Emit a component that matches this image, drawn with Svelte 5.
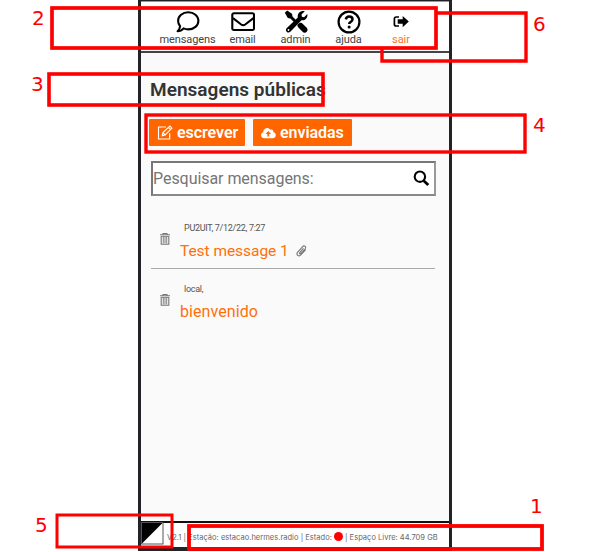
<script>
  const nav = [
    { id: 'chat', label: 'mensagens', ls: -0.1 },
    { id: 'mail', label: 'email', ls: -0.2 },
    { id: 'tools', label: 'admin', ls: -0.1 },
    { id: 'help', label: 'ajuda', ls: -0.1 },
    { id: 'exit', label: 'sair', ls: 0 }
  ];
  const messages = [
    { meta: 'PU2UIT, 7/12/22, 7:27', title: 'Test message 1', attachment: true },
    { meta: 'local,', title: 'bienvenido', attachment: false }
  ];
  const boxes = [
    { x: 52, y: 8, w: 384, h: 40, s: 3.7 },
    { x: 49, y: 74, w: 274, h: 31, s: 3.6 },
    { x: 146, y: 115, w: 379, h: 37, s: 3.4 },
    { x: 57, y: 515, w: 115, h: 32, s: 3 },
    { x: 189, y: 526, w: 353, h: 23, s: 3.8 }
  ];
  const labels = [
    { n: 2, x: 32, y: 25 },
    { n: 3, x: 31, y: 91 },
    { n: 6, x: 533, y: 31 },
    { n: 4, x: 533, y: 132 },
    { n: 5, x: 35, y: 532 },
    { n: 1, x: 530, y: 513 }
  ];
</script>

<div class="page">
  <div class="phone">
    <nav>
      {#each nav as item}
        <div class="item {item.id}">
          <div class="icon">
            {#if item.id === 'chat'}
              <svg width="24" height="24" viewBox="0 0 24 24" fill="none" stroke="#000" stroke-width="2.1" stroke-linejoin="round"><path d="M12.300 2.200c5.700 0 10.100 3.800 10.100 8.600s-4.400 8.600-10.100 8.600c-1.700 0-3.300-.3-4.700-1-1.500 1.700-3.500 2.900-6 2.900 1.500-1.500 2.300-3.200 2.500-5C2.700 14.700 2.100 12.800 2.100 10.800c0-4.800 4.400-8.600 10.200-8.600z" /></svg>
            {:else if item.id === 'mail'}
              <svg width="24" height="24" viewBox="0 0 24 24" fill="none" stroke="#000" stroke-width="2.1" stroke-linejoin="round"><rect x="1.300" y="3.200" width="21.700" height="16.800" rx="1.600" /><path d="M2 8.200l8.200 6.300q2 1.400 4 0L22.500 8.200" /></svg>
            {:else if item.id === 'tools'}
              <svg width="24" height="24" viewBox="0 0 24 24"><path d="M.8 2.800L3.200.4 8 3.800 8.500 6.400 12 10.100 10 12.100 6.300 8.400 3.800 8z" fill="#000" /><path d="M13.300 13l2.100-1.800c1.400-.4 2.600 0 3.500.9l3.800 3.900c1.900 1.900.4 5-2.100 4.900-.8 0-1.500-.4-2-.9l-4-4.100c-.9-.9-1.200-1.700-1.300-2.900z" transform="translate(0 1.800)" fill="#000" /><path d="M20.800 1.300l-3.300 3.300.4 2.200 2.200.4 3.200-3.200c.7 3.500-1.800 6.800-5.800 6.200L6.300 21.800c-2.300 2.300-5.900-1-3.700-3.500L13.800 7.400C13.100 3 17 .1 20.800 1.300z" fill="#000" /><circle cx="4.500" cy="20" r=".9" fill="#fff" /></svg>
            {:else if item.id === 'help'}
              <svg width="24" height="24" viewBox="0 0 24 24" fill="none" stroke="#000"><circle cx="12" cy="12" r="10.400" stroke-width="2.200" /><path d="M8.800 9.300c.5-1.800 1.600-2.700 3.300-2.700 2 0 3.400 1.100 3.400 2.800 0 2.400-3.300 2.400-3.300 4.700" stroke-width="2.500" /><circle cx="12.100" cy="17" r="1.500" fill="#000" stroke="none" /></svg>
            {:else}
              <svg width="16" height="14" viewBox="0 0 16 14"><path d="M6 2H3.200Q1.400 2 1.400 3.800v5.400Q1.400 11 3.200 11H6" fill="none" stroke="#000" stroke-width="1.700" /><path d="M4.700 4.300h5V.9L15.800 6.500 9.700 12.200V8.800h-5z" fill="#000" /></svg>
            {/if}
          </div>
          <span style:letter-spacing="{item.ls}px">{item.label}</span>
        </div>
      {/each}
    </nav>

    <main>
      <h1>Mensagens públicas</h1>
      <div class="actions">
        <button class="write">
          <svg width="16" height="16" viewBox="0 0 16 16" fill="none" stroke="#fff" stroke-width="1.100"><path d="M9 2H1.500v12h11.200V8.300M5.200 10.800l.7-3.200 7-6.600 2 2.200-6.800 6.700zM5.900 7.600l2.200 2.300M11.500 2.400l2 2.200" /></svg>
          <span>escrever</span>
        </button>
        <button class="sent">
          <svg width="15" height="12" viewBox="0 0 15 12"><path d="M3.400 11.300C-.7 11.300-1 6 2.200 5.200 2 1.600 7-.9 9.200 2.700c1.500-.9 3.500.4 3.100 2.200 3.600.8 3.200 6.400-.7 6.400z" fill="#fff" /><path d="M7.300 4L4.500 6.900h1.900v2.600h1.800V6.900h1.900z" fill="#ff6600" /></svg>
          <span>enviadas</span>
        </button>
      </div>
      <div class="search">
        <span>Pesquisar mensagens:</span>
        <svg width="17" height="17" viewBox="0 0 17 17" fill="none" stroke="#000"><circle cx="6.900" cy="6.700" r="5.200" stroke-width="2.100" /><path d="M10.700 10.700l4.600 4.400" stroke-width="2.700" /></svg>
      </div>
      <ul>
        {#each messages as m, i}
          <li>
            <svg class="trash" width="10" height="12" viewBox="0 0 10 12"><path d="M0 1.800h10M3 1.600V.5h4v1.100M1.200 3v8.300h7.600V3" fill="none" stroke="#777" stroke-width="1.100" /><path d="M1 3.400h8M3.300 3.500v7M5 3.500v7M6.700 3.500v7" stroke="#777" stroke-width=".9" /></svg>
            <div class="body">
              <div class="meta m{i}">{m.meta}</div>
              <div class="line">
                <span class="title t{i}">{m.title}</span>
                {#if m.attachment}
                  <svg width="11" height="12" viewBox="0 0 11 12" fill="none" stroke="#777" stroke-width="1.100"><path d="M7.500 3.300L3.800 7.600c-.7.900.4 1.800 1.100 1L9 4c1.700-2-.7-4.200-2.500-2.200L1.700 7.200c-2 2.300 1 5.100 3.100 2.800L9.700 4.700" /></svg>
                {/if}
              </div>
            </div>
          </li>
        {/each}
      </ul>
    </main>

    <footer>
      <svg class="contrast" width="23" height="23" viewBox="0 0 23 23"><rect x=".5" y=".5" width="21.500" height="21.500" fill="#fff" stroke="#555" /><path d="M1 1h20.500L1 21.500z" fill="#000" /></svg>
      <div class="status">
        <span class="version">V2.1 |</span>
        <span class="station">Estação: estacao.hermes.radio | Estado:</span>
        <i></i>
        <span class="space">| Espaço Livre: 44.709 GB</span>
      </div>
    </footer>
  </div>

  <svg class="notes" width="600" height="552" viewBox="0 0 600 552">
    <path d="M436 13H526V61H382V48" fill="none" stroke="#f00" stroke-width="3.400" />
    {#each boxes as b}
      <rect x={b.x} y={b.y} width={b.w} height={b.h} fill="none" stroke="#f00" stroke-width={b.s} />
    {/each}
    {#each labels as l}
      <text x={l.x} y={l.y}>{l.n}</text>
    {/each}
  </svg>
</div>

<style>
  :global(body) { margin: 0; background: #fff; }
  .page { position: relative; width: 600px; height: 552px; overflow: hidden; font-family: Roboto, "Liberation Sans", sans-serif; }
  .phone { box-sizing: border-box; width: 314px; height: 551px; margin-left: 138px; border: 3px solid #222326; border-top: 1px solid #222; border-bottom-width: 4px; background: #fafafa; display: flex; flex-direction: column; }
  nav { box-sizing: border-box; height: 52px; background: #fff; border-top: 1px solid #999; border-bottom: 2px solid #444; display: flex; padding: 8px 0 0 20px; }
  .item { display: flex; flex-direction: column; align-items: center; font-size: 11px; line-height: 12px; color: #444; }
  .icon { height: 24px; display: flex; align-items: center; justify-content: center; }
  .item.chat { width: 53px; }
  .item.mail { width: 57px; }
  .item.tools { width: 49px; }
  .item.help { width: 57px; }
  .item.exit { width: 48px; color: #ff7518; }
  main { flex: 1; padding: 26px 13px 0 10px; }
  h1 { margin: 0 0 0 -1px; font-size: 19px; line-height: 22px; font-weight: 600; color: #333; letter-spacing: 0.03px; white-space: nowrap; }
  .actions { display: flex; gap: 8px; margin: 18px 0 0 -2px; }
  button { box-sizing: border-box; display: flex; align-items: center; height: 27px; border: 0; border-radius: 1px; background: #ff6600; color: #fff; font: 600 16px Roboto, sans-serif; letter-spacing: -0.05px; padding: 0 0 0 8px; white-space: nowrap; }
  .write { width: 96px; gap: 4px; }
  .sent { width: 99px; gap: 4px; }
  .search { box-sizing: border-box; height: 35px; width: 285px; margin-top: 15px; border: 2px solid #777; border-right-color: #999; border-bottom-color: #888; background: #fff; display: flex; align-items: center; justify-content: space-between; padding: 0 4px 1px 0; font-size: 16px; letter-spacing: -0.05px; color: #757575; }
  ul { list-style: none; margin: 12px 0 0; padding: 0; width: 284px; }
  li { box-sizing: border-box; height: 61px; display: flex; padding: 14px 0 0 9px; }
  li:first-child { border-bottom: 1px solid #aaa; }
  .trash { margin-top: 11px; margin-right: 10px; }
  .meta { font-size: 9px; line-height: 12px; color: #555; padding-left: 4px; letter-spacing: -0.29px; }
  .line { display: flex; align-items: center; gap: 7px; height: 20px; margin-top: 7px; }
  .title { font-size: 16px; line-height: 20px; color: #ff6f0a; white-space: nowrap; }
  .t0 { font-size: 15.500px; letter-spacing: -0.05px; }
  .t1 { letter-spacing: 0.08px; }
  footer { height: 24px; border-top: 2px solid #111; background: #fff; display: flex; flex: none; }
  .contrast { margin-top: -1px; flex: none; }
  .status { display: flex; align-items: center; height: 29px; margin-left: 3px; font-family: Inter, sans-serif; font-size: 7.500px; letter-spacing: 0.03px; color: #666; white-space: nowrap; }
  .status i { width: 9px; height: 9px; border-radius: 50%; background: #f00; margin: 0 2px 2px; }
  .station { margin-left: 2px; }
  .notes { position: absolute; left: 0; top: 0; }
  .notes text { font-family: "DejaVu Sans", sans-serif; font-size: 20px; fill: #f00; }
</style>
